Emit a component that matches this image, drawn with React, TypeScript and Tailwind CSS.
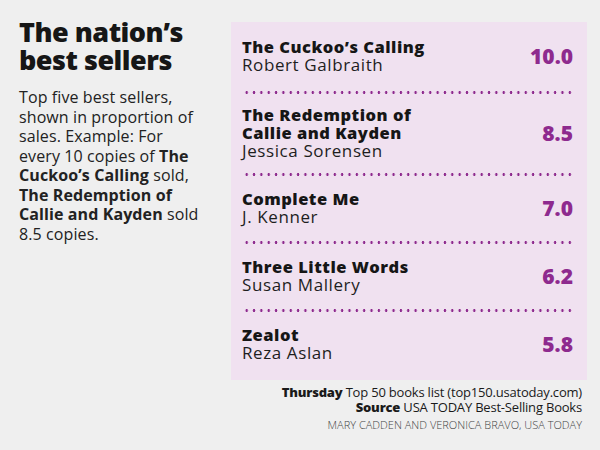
const books = [
  { title: ['The Cuckoo’s Calling'], author: 'Robert Galbraith', score: '10.0', pad: 'pt-[16px] pb-[17px]' },
  { title: ['The Redemption of', 'Callie and Kayden'], author: 'Jessica Sorensen', score: '8.5', pad: 'pt-[12px] pb-[13px]' },
  { title: ['Complete Me'], author: 'J. Kenner', score: '7.0', pad: 'pt-[14px] pb-[15px]' },
  { title: ['Three Little Words'], author: 'Susan Mallery', score: '6.2', pad: 'pt-[14px] pb-[15px]' },
  { title: ['Zealot'], author: 'Reza Aslan', score: '5.8', pad: 'pt-[14px] pb-[18px]' },
];

const DotRule = () => (
  <div className="h-[3px] mx-[1px] bg-[radial-gradient(circle,#8e2a8e_1.1px,transparent_1.5px)] bg-[length:7.35px_3px] bg-repeat-x" />
);

export default function App() {
  return (
    <div className="w-[600px] h-[450px] bg-[#efefef] text-[#1a1a1a] font-['Open_Sans','Liberation_Sans',sans-serif] flex pt-[18px] pl-[19px] overflow-hidden">
      {/* intro */}
      <div className="w-[212px] shrink-0">
        <h1 className="text-[27px] leading-[28px] font-extrabold tracking-[-0.5px] text-[#161616]">
          The nation’s
          <br />
          best sellers
        </h1>
        <p className="mt-[14px] text-[16px] leading-[19.5px] tracking-[0.1px] text-[#222] whitespace-nowrap">
          Top five best sellers,
          <br />
          shown in proportion of
          <br />
          sales. Example: For
          <br />
          every 10 copies of <b className="font-bold">The</b>
          <br />
          <b className="font-bold">Cuckoo’s Calling</b> sold,
          <br />
          <b className="font-bold">The Redemption of</b>
          <br />
          <b className="font-bold">Callie and Kayden</b> sold
          <br />
          8.5 copies.
        </p>
      </div>

      {/* list */}
      <div className="w-[356px] shrink-0 mt-[4px]">
        <div className="bg-[#f0e1f0] pl-[11px] pr-[14px]">
          {books.map((b, i) => (
            <div key={b.author}>
              {i > 0 && <DotRule />}
              <div className={`flex items-center justify-between ${b.pad}`}>
                <div className="leading-[18px]">
                  {b.title.map((t) => (
                    <div key={t} className="text-[16.5px] font-extrabold tracking-[0.5px] text-[#161616]">
                      {t}
                    </div>
                  ))}
                  <div className="text-[17px] tracking-[0.6px] text-[#1e1e1e]">{b.author}</div>
                </div>
                <div className="text-[21px] font-extrabold text-[#8e2a8e] leading-none">{b.score}</div>
              </div>
            </div>
          ))}
        </div>

        <div className="pr-[5px] pt-[5px] text-right text-[13px] leading-[15px] tracking-[-0.2px] text-[#1a1a1a]">
          <div>
            <b className="font-extrabold">Thursday</b> Top 50 books list (top150.usatoday.com)
          </div>
          <div>
            <b className="font-extrabold">Source</b> USA TODAY Best-Selling Books
          </div>
          <div className="mt-[4px] text-[11px] leading-[12px] tracking-[0px] text-[#444] font-light">
            MARY CADDEN AND VERONICA BRAVO, USA TODAY
          </div>
        </div>
      </div>
    </div>
  );
}
